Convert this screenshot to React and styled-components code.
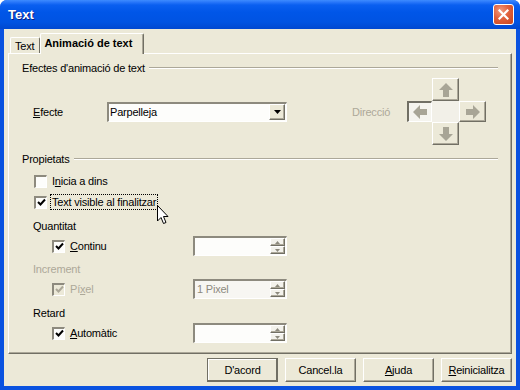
import React from "react";
import styled, { createGlobalStyle, css } from "styled-components";

const GlobalStyle = createGlobalStyle`
  html, body { margin: 0; padding: 0; background: #ffffff; }
  body {
    font-family: "Liberation Sans", Arial, sans-serif;
    font-size: 11px;
    letter-spacing: -0.2px;
    color: #000;
  }
`;

const Window = styled.div`
  width: 520px;
  height: 390px;
  box-sizing: border-box;
  display: flex;
  flex-direction: column;
  background: #0a52e0;
  border-radius: 7px 7px 0 0;
  overflow: hidden;
`;

const TitleBar = styled.div`
  height: 29px;
  flex: none;
  display: flex;
  align-items: center;
  justify-content: space-between;
  padding: 0 6px 0 8px;
  box-sizing: border-box;
  background: linear-gradient(
    to bottom,
    #3d8bff 0px,
    #2a78fa 2px,
    #0a5ff0 5px,
    #0056e8 12px,
    #0053e2 22px,
    #0048d0 29px
  );
`;

const Title = styled.span`
  font-family: "Liberation Sans", Arial, sans-serif;
  font-weight: bold;
  font-size: 13px;
  letter-spacing: 0;
  color: #fff;
  text-shadow: 1px 1px 0 #0a1e80;
`;

const CloseBtn = styled.div`
  width: 21px;
  height: 21px;
  box-sizing: border-box;
  border: 1px solid #fff;
  border-radius: 3px;
  background: radial-gradient(circle at 35% 30%, #f29a7d 0%, #e0603c 45%, #c6441c 100%);
  display: flex;
  align-items: center;
  justify-content: center;
  margin-top: -1px;
`;

const Body = styled.div`
  flex: 1;
  margin: 0 4px 4px 4px;
  background: #ece9d8;
  padding: 4px 4px 0 4px;
  display: flex;
  flex-direction: column;
`;

const TabStrip = styled.div`
  display: flex;
  align-items: flex-end;
  height: 20px;
  padding-left: 2px;
  position: relative;
  z-index: 1;
`;

const Tab = styled.div`
  box-sizing: border-box;
  display: flex;
  align-items: center;
  background: #ece9d8;
  border-top: 1px solid #fff;
  border-left: 1px solid #fff;
  border-right: 1px solid #716f64;
  border-radius: 2px 2px 0 0;
  ${(p) =>
    p.$active
      ? css`
          height: 21px;
          margin-bottom: -1px;
          padding: 0 11px 2px 3px;
          font-weight: bold;
          letter-spacing: 0;
          box-shadow: inset -1px 0 0 #aca899;
        `
      : css`
          height: 16px;
          padding: 0 5px 0 4px;
        `}
`;

const Panel = styled.div`
  box-sizing: border-box;
  height: 301px;
  border-top: 1px solid #fff;
  border-left: 1px solid #fff;
  border-right: 1px solid #716f64;
  border-bottom: 1px solid #716f64;
  box-shadow: inset -1px -1px 0 #aca899;
  padding: 0 13px 0 13px;
  display: flex;
  flex-direction: column;
`;

const Heading = styled.div`
  display: flex;
  align-items: center;
  gap: 4px;
  height: 14px;
  margin-top: ${(p) => p.$mt}px;
  &::after {
    content: "";
    flex: 1;
    height: 0;
    border-top: 1px solid #aca899;
    border-bottom: 1px solid #fff;
  }
`;

const Row = styled.div`
  display: flex;
  align-items: center;
  height: ${(p) => p.$h || 20}px;
  margin-top: ${(p) => p.$mt || 0}px;
  padding-left: ${(p) => p.$indent || 0}px;
  color: ${(p) => (p.$disabled ? "#aca899" : "#000")};
`;

const FieldLabel = styled.span`
  width: ${(p) => p.$w}px;
  flex: none;
`;

const Sunken = css`
  box-sizing: border-box;
  border-style: solid;
  border-width: 2px 1px 1px 2px;
  border-color: #8d8a7e #fff #fff #8d8a7e;
  background: #fdfdfb;
`;

const Select = styled.div`
  ${Sunken}
  width: 180px;
  height: 20px;
  display: flex;
  align-items: center;
  justify-content: space-between;
  padding: 0 1px 0 1px;
`;

const RaisedBtn = css`
  box-sizing: border-box;
  background: #ece9d8;
  border: 1px solid;
  border-color: #fff #716f64 #716f64 #fff;
  box-shadow: inset -1px -1px 0 #aca899;
`;

const SelectButton = styled.div`
  ${RaisedBtn}
  width: 16px;
  height: 16px;
  display: flex;
  align-items: center;
  justify-content: center;
`;

const DirLabel = styled.span`
  color: #aca899;
  margin-left: 65px;
  width: 55px;
`;

const Pad = styled.div`
  display: grid;
  grid-template-columns: 25px 27px 27px;
  grid-template-rows: 23px 21px 23px;
`;

const PadBtn = styled.div`
  grid-column: ${(p) => p.$col};
  grid-row: ${(p) => p.$row};
  display: flex;
  align-items: center;
  justify-content: center;
  box-sizing: border-box;
  ${(p) =>
    p.$pressed
      ? css`
          background: #f5f4ee;
          border-style: solid;
          border-width: 2px 1px 1px 2px;
          border-color: #716f64 #fff #fff #716f64;
        `
      : p.$blank
      ? css`
          background: #f2f0e8;
        `
      : RaisedBtn}
`;

const Check = styled.span`
  ${Sunken}
  width: 13px;
  height: 13px;
  flex: none;
  display: inline-flex;
  align-items: center;
  justify-content: center;
  background: ${(p) => (p.$disabled ? "#ece9d8" : "#fdfdfb")};
`;

const CheckItem = styled.label`
  display: flex;
  align-items: center;
  gap: ${(p) => p.$gap || 5}px;
  width: ${(p) => (p.$w ? `${p.$w}px` : "auto")};
  flex: none;
`;

const CheckText = styled.span`
  padding: 1px 1px;
  border: 1px dotted ${(p) => (p.$focus ? "#000" : "transparent")};
  margin-left: -2px;
`;

const Spin = styled.div`
  ${Sunken}
  width: 94px;
  height: 20px;
  display: flex;
  align-items: stretch;
  justify-content: space-between;
  padding: 0 1px 1px 2px;
  color: ${(p) => (p.$disabled ? "#8d8a7e" : "#000")};
  background: ${(p) => (p.$disabled ? "#f7f6f2" : "#fdfdfb")};
`;

const SpinText = styled.span`
  display: flex;
  align-items: center;
`;

const SpinBtns = styled.div`
  display: flex;
  flex-direction: column;
  width: 15px;
`;

const SpinBtn = styled.div`
  ${RaisedBtn}
  flex: 1;
  display: flex;
  align-items: center;
  justify-content: center;
  background: #f3f2ec;
`;

const Footer = styled.div`
  display: flex;
  justify-content: flex-end;
  gap: 7px;
  margin-top: 4px;
`;

const Button = styled.div`
  ${RaisedBtn}
  width: 71px;
  height: 24px;
  display: flex;
  align-items: center;
  justify-content: center;
  ${(p) =>
    p.$default &&
    css`
      border-color: #fff #404040 #404040 #fff;
      outline: 1px solid #716f64;
      outline-offset: -1px;
      box-shadow: inset -1px -1px 0 #716f64, inset 1px 1px 0 #fff;
    `}
`;

const CheckArea = styled.div`
  position: relative;
`;

const Cursor = styled.svg`
  position: absolute;
  left: 135px;
  top: 14px;
`;

const Arrow = ({ rot }) => (
  <svg width="14" height="14" viewBox="0 0 14 14" style={{ transform: `rotate(${rot}deg)` }}>
    <polygon points="7,0 14,7 10,7 10,14 4,14 4,7 0,7" fill="#a8a596" />
  </svg>
);

const Tri = ({ down = true, color = "#000", w = 7 }) => (
  <svg width={w} height={Math.ceil(w / 2)} viewBox={`0 0 ${w} ${Math.ceil(w / 2)}`}>
    <polygon
      points={down ? `0,0 ${w},0 ${w / 2},${Math.ceil(w / 2)}` : `0,${Math.ceil(w / 2)} ${w},${Math.ceil(w / 2)} ${w / 2},0`}
      fill={color}
    />
  </svg>
);

const Tick = ({ color = "#000" }) => (
  <svg width="9" height="9" viewBox="0 0 9 9">
    <polyline points="1,4 3.5,6.5 8,1.5" fill="none" stroke={color} strokeWidth="2" />
  </svg>
);

const SpinBox = ({ value, disabled }) => (
  <Spin $disabled={disabled}>
    <SpinText>{value}</SpinText>
    <SpinBtns>
      <SpinBtn>
        <Tri down={false} color="#8d8a7e" w={5} />
      </SpinBtn>
      <SpinBtn>
        <Tri color="#8d8a7e" w={5} />
      </SpinBtn>
    </SpinBtns>
  </Spin>
);

export default function App() {
  return (
    <>
      <GlobalStyle />
      <Window>
        <TitleBar>
          <Title>Text</Title>
          <CloseBtn>
            <svg width="11" height="11" viewBox="0 0 11 11">
              <path d="M1.5 1.5 L9.5 9.5 M9.5 1.5 L1.5 9.5" stroke="#fff" strokeWidth="2.2" strokeLinecap="square" />
            </svg>
          </CloseBtn>
        </TitleBar>
        <Body>
          <TabStrip>
            <Tab>Text</Tab>
            <Tab $active>Animació de text</Tab>
          </TabStrip>
          <Panel>
            <Heading $mt={7}>Efectes d'animació de text</Heading>
            <Row $h={67} $mt={3} $indent={11}>
              <FieldLabel $w={74}>
                <u>E</u>fecte
              </FieldLabel>
              <Select>
                <span>Parpelleja</span>
                <SelectButton>
                  <Tri />
                </SelectButton>
              </Select>
              <DirLabel>Direcció</DirLabel>
              <Pad>
                <PadBtn $col={2} $row={1}>
                  <Arrow rot={0} />
                </PadBtn>
                <PadBtn $col={1} $row={2} $pressed>
                  <Arrow rot={-90} />
                </PadBtn>
                <PadBtn $col={2} $row={2} $blank />
                <PadBtn $col={3} $row={2}>
                  <Arrow rot={90} />
                </PadBtn>
                <PadBtn $col={2} $row={3}>
                  <Arrow rot={180} />
                </PadBtn>
              </Pad>
            </Row>

            <Heading $mt={7}>Propietats</Heading>
            <Row $mt={5} $indent={12}>
              <CheckItem>
                <Check />
                <CheckText>
                  I<u>n</u>icia a dins
                </CheckText>
              </CheckItem>
            </Row>
            <CheckArea>
              <Row $mt={1} $indent={12}>
                <CheckItem>
                  <Check>
                    <Tick />
                  </Check>
                  <CheckText $focus>Text visible al finalitzar</CheckText>
                </CheckItem>
              </Row>
              <Cursor width="12" height="20" viewBox="0 0 12 20">
                <path d="M0.5 0.5 L0.5 16 L4 12.5 L6.5 18.5 L9 17.5 L6.5 11.5 L11 11.5 Z" fill="#fff" stroke="#000" strokeWidth="1" />
              </Cursor>
            </CheckArea>

            <Row $mt={4} $indent={11}>
              Quantitat
            </Row>
            <Row $indent={30}>
              <CheckItem $w={141}>
                <Check>
                  <Tick />
                </Check>
                <CheckText>
                  <u>C</u>ontinu
                </CheckText>
              </CheckItem>
              <SpinBox value="" />
            </Row>

            <Row $mt={3} $indent={11} $disabled>
              Increment
            </Row>
            <Row $indent={30} $disabled>
              <CheckItem $w={141}>
                <Check $disabled>
                  <Tick color="#aca899" />
                </Check>
                <CheckText>
                  Pí<u>x</u>el
                </CheckText>
              </CheckItem>
              <SpinBox value="1 Pixel" disabled />
            </Row>

            <Row $mt={4} $indent={11}>
              Retard
            </Row>
            <Row $indent={30}>
              <CheckItem $w={141}>
                <Check>
                  <Tick />
                </Check>
                <CheckText>
                  <u>A</u>utomàtic
                </CheckText>
              </CheckItem>
              <SpinBox value="" />
            </Row>
          </Panel>
          <Footer>
            <Button $default>D'acord</Button>
            <Button>Cancel.la</Button>
            <Button>
              <span>
                <u>A</u>juda
              </span>
            </Button>
            <Button>
              <span>
                <u>R</u>einicialitza
              </span>
            </Button>
          </Footer>
        </Body>
      </Window>
    </>
  );
}
